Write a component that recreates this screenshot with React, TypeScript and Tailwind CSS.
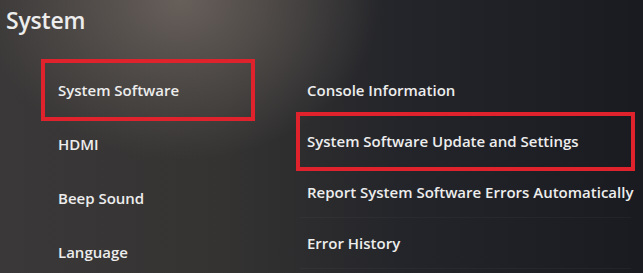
const LEFT_ITEMS = ["System Software", "HDMI", "Beep Sound", "Language"];

const RIGHT_ITEMS = [
  "Console Information",
  "System Software Update and Settings",
  "Report System Software Errors Automatically",
  "Error History",
];

export default function App() {
  return (
    <div
      className="h-[273px] w-[643px] overflow-hidden bg-[radial-gradient(ellipse_200px_160px_at_28%_0%,#675f5a,transparent),linear-gradient(90deg,#3a3838_0%,#343332_35%,#24252a_62%,#1a1b20_100%)] text-[#ededed]"
      style={{ fontFamily: '"Open Sans", "Noto Sans", sans-serif' }}
    >
      {/* Title */}
      <h1 className="pl-[6px] pt-[4px] text-[23px] font-semibold leading-[32px] tracking-[-0.2px]">
        System
      </h1>

      <div className="flex">
        {/* Left menu */}
        <ul className="ml-[45px] mt-[27px] w-[206px]">
          {LEFT_ITEMS.map((item, i) => (
            <li
              key={item}
              className={
                i === 0
                  ? "flex h-[54px] items-center pl-[13px] text-[15px] font-semibold outline-4 outline-[#e0222c]"
                  : "flex h-[54px] items-center pl-[13px] text-[15px] font-semibold"
              }
            >
              {item}
            </li>
          ))}
        </ul>

        {/* Right menu */}
        <ul className="ml-[49px] mt-[29px] w-[331px]">
          {RIGHT_ITEMS.map((item, i) => (
            <li
              key={item}
              className={
                i === 1
                  ? "flex h-[51px] items-center pl-[7px] text-[15px] font-semibold whitespace-nowrap outline-4 outline-[#e0222c]"
                  : "flex h-[51px] items-center border-b border-white/[0.03] pl-[7px] text-[15px] font-semibold whitespace-nowrap"
              }
            >
              {item}
            </li>
          ))}
        </ul>
      </div>
    </div>
  );
}
